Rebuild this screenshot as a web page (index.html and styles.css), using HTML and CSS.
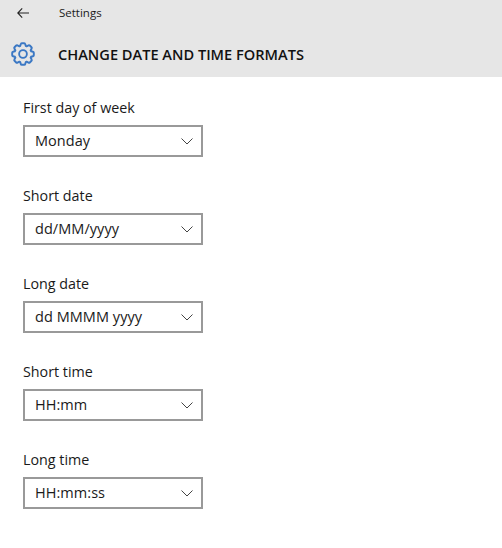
FILE: index.html
```html
<!DOCTYPE html>
<html lang="en">
<head>
<meta charset="utf-8">
<title>Settings</title>
<link rel="stylesheet" href="styles.css">
</head>
<body>
<header class="header">
  <div class="topbar">
    <svg class="back" width="12" height="10" viewBox="0 0 12 10"><path d="M5.200.4.800 5l4.400 4.600M.8 5H12" fill="none" stroke="#222" stroke-width="1.100"/></svg>
    <span class="app">Settings</span>
  </div>
  <div class="titlebar">
    <svg class="gear" width="24" height="24" viewBox="-13 -13 26 26">
      <defs><path id="tooth" d="M-3.290-7.950-2.400-10.800Q-2.200-11.700-1.300-11.700H1.300Q2.200-11.700 2.400-10.800L3.290-7.950" fill="none" stroke="#3b78c4" stroke-width="2.100"/></defs>
      <use href="#tooth"/><use href="#tooth" transform="rotate(45)"/><use href="#tooth" transform="rotate(90)"/><use href="#tooth" transform="rotate(135)"/><use href="#tooth" transform="rotate(180)"/><use href="#tooth" transform="rotate(225)"/><use href="#tooth" transform="rotate(270)"/><use href="#tooth" transform="rotate(315)"/>
      <circle r="4.200" fill="none" stroke="#3b78c4" stroke-width="2"/>
    </svg>
    <h1 class="title">CHANGE DATE AND TIME FORMATS</h1>
  </div>
</header>
<main class="form">
  <div class="field"><label class="label">First day of week</label><div class="select"><span class="value">Monday</span><svg class="chev" width="12" height="7" viewBox="0 0 12 7"><path d="M.5.5 6 6l5.500-5.500" fill="none" stroke="#444" stroke-width="1"/></svg></div></div>
  <div class="field"><label class="label">Short date</label><div class="select"><span class="value">dd/MM/yyyy</span><svg class="chev" width="12" height="7" viewBox="0 0 12 7"><path d="M.5.5 6 6l5.500-5.500" fill="none" stroke="#444" stroke-width="1"/></svg></div></div>
  <div class="field"><label class="label">Long date</label><div class="select"><span class="value">dd MMMM yyyy</span><svg class="chev" width="12" height="7" viewBox="0 0 12 7"><path d="M.5.5 6 6l5.500-5.500" fill="none" stroke="#444" stroke-width="1"/></svg></div></div>
  <div class="field"><label class="label">Short time</label><div class="select"><span class="value">HH:mm</span><svg class="chev" width="12" height="7" viewBox="0 0 12 7"><path d="M.5.5 6 6l5.500-5.500" fill="none" stroke="#444" stroke-width="1"/></svg></div></div>
  <div class="field"><label class="label">Long time</label><div class="select"><span class="value">HH:mm:ss</span><svg class="chev" width="12" height="7" viewBox="0 0 12 7"><path d="M.5.5 6 6l5.500-5.500" fill="none" stroke="#444" stroke-width="1"/></svg></div></div>
</main>
</body>
</html>
```
FILE: styles.css
```css
* { box-sizing: border-box; }
html, body { margin: 0; padding: 0; background: #fff; }
body { width: 502px; height: 548px; overflow: hidden; font-family: "Open Sans", "Noto Sans", sans-serif; color: #1a1a1a; }
.header { height: 77px; background: #e6e6e6; }
.topbar { height: 32px; display: flex; align-items: center; padding: 0 0 7px 17px; }
.back { display: block; }
.app { margin-left: 30px; font-size: 11.500px; line-height: 16px; }
.titlebar { height: 45px; display: flex; align-items: center; padding: 0 0 2px 11px; }
.gear { display: block; }
.title { margin: 0 0 0 23px; font-size: 14.600px; line-height: 20px; font-weight: 600; color: #111; }
.form { padding: 20px 0 0 23px; display: flex; flex-direction: column; gap: 28px; }
.field { display: flex; flex-direction: column; gap: 7px; height: 60px; }
.label { font-size: 14.300px; line-height: 21px; }
.select { width: 180px; height: 32px; border: 2px solid #999; padding: 0 8px 2px 10px; display: flex; align-items: center; justify-content: space-between; font-size: 14.500px; }
.value { letter-spacing: .05px; }
.chev { display: block; margin-top: 2px; }
```
